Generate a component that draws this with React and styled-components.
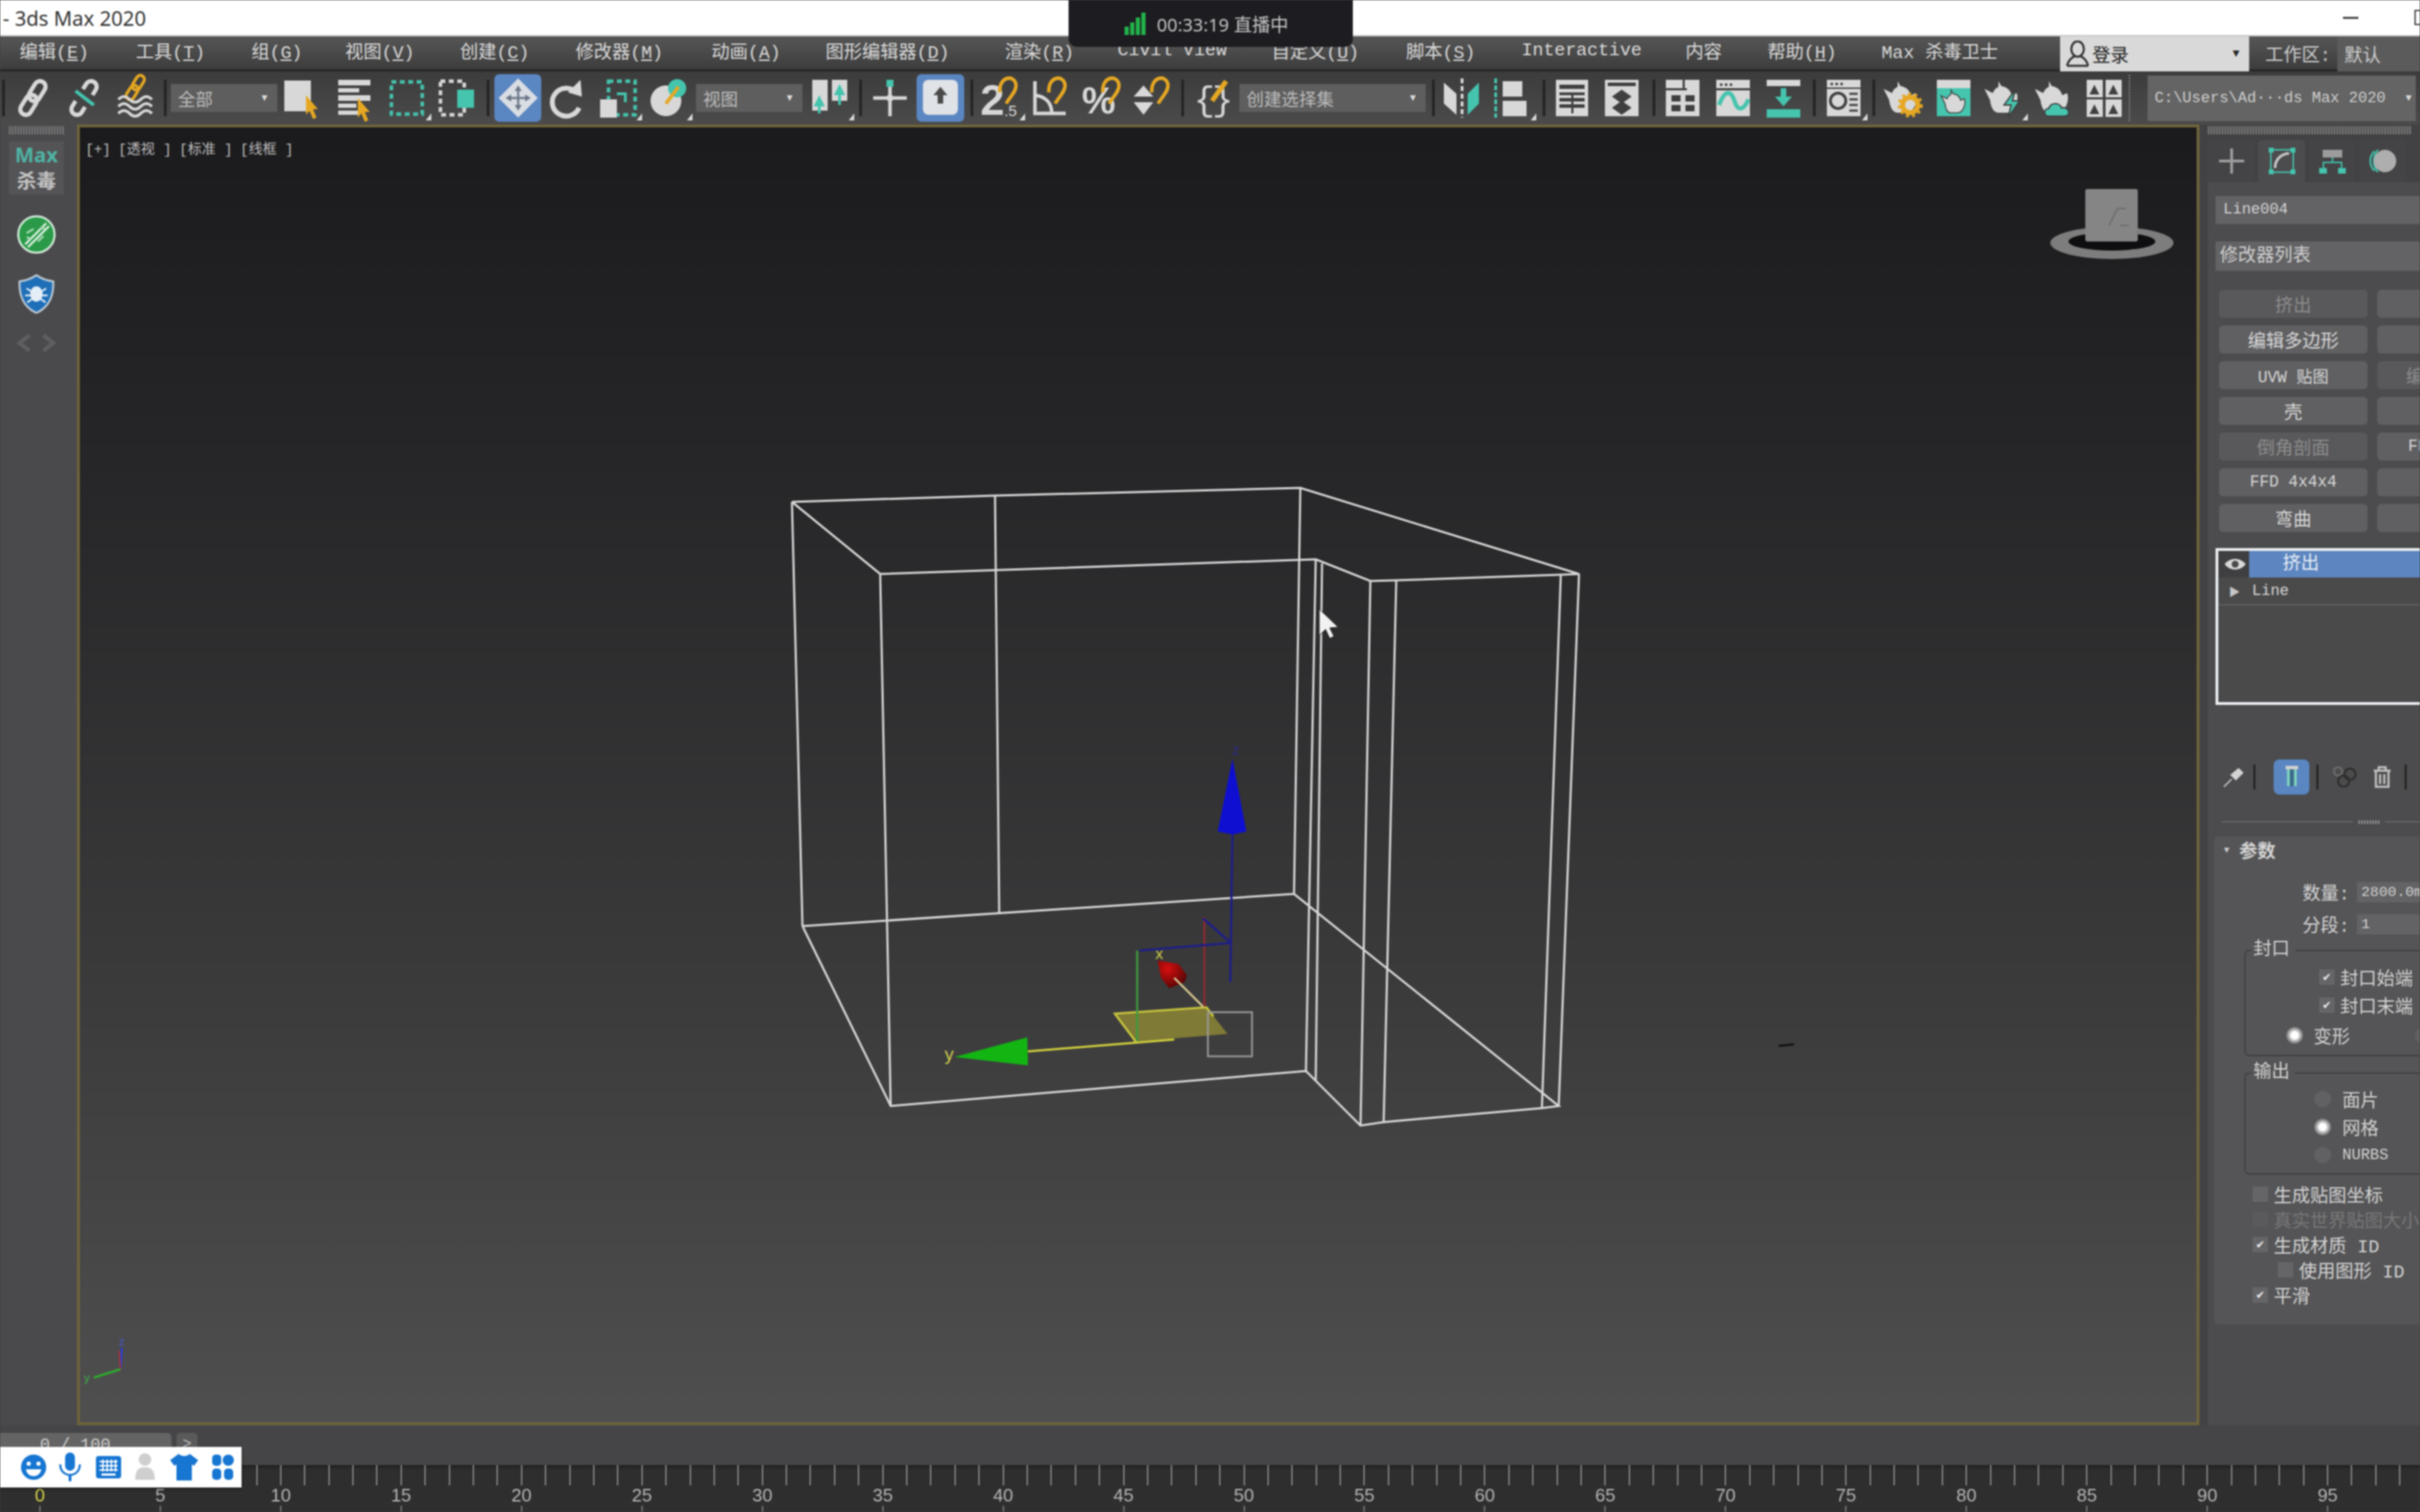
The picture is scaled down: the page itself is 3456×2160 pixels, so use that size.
import React from "react";
import styled, { createGlobalStyle } from "styled-components";

const MONO = `"Liberation Mono", "Noto Sans CJK SC", monospace`;
const SANS = `"Noto Sans", "Noto Sans CJK SC", sans-serif`;
const L = "#d8d8d8";
const T = "#45c4ae";
const Y = "#e6a822";
const D = "#3f3f3f";

const GlobalStyle = createGlobalStyle`
  html, body { margin: 0; padding: 0; background: #414143; overflow: hidden; }
  * { box-sizing: border-box; }
`;

const Page = styled.div`
  position: relative;
  width: 3456px;
  height: 2160px;
  display: flex;
  flex-direction: column;
  overflow: hidden;
  font-family: ${MONO};
  filter: blur(1px);
`;

const TitleBar = styled.div`
  height: 52px;
  flex: none;
  background: #fff;
  display: flex;
  align-items: center;
  justify-content: space-between;
  padding: 0 0 0 4px;
  font: 29px ${SANS};
  color: #333;
  border-bottom: 2px solid #c8c8c8;
`;
const WinButtons = styled.div`
  display: flex;
  align-items: center;
  gap: 80px;
  margin-right: -14px;
`;
const MinBtn = styled.div`
  width: 22px;
  height: 3px;
  background: #444;
`;
const MaxBtn = styled.div`
  width: 22px;
  height: 22px;
  border: 2px solid #444;
`;
const LivePill = styled.div`
  position: absolute;
  left: 1526px;
  top: 0;
  width: 406px;
  height: 67px;
  background: #1d1c20;
  border-radius: 0 0 12px 12px;
  display: flex;
  align-items: center;
  padding-left: 80px;
  gap: 16px;
  color: #c4c4c4;
  font: 26px ${SANS};
  z-index: 3;
`;

const MenuBar = styled.div`
  height: 50px;
  flex: none;
  display: flex;
  align-items: center;
  padding-left: 28px;
  background: linear-gradient(#565656, #3d3d3d);
  border-bottom: 3px solid #262626;
  color: #dadada;
  font-size: 26px;
  white-space: nowrap;
`;
const MenuItem = styled.div`
  width: ${(p) => p.$w}px;
  flex: none;
  padding-bottom: 7px;
`;
const Login = styled.div`
  width: 270px;
  height: 50px;
  flex: none;
  margin-top: 3px;
  background: #d9d9d9;
  color: #222;
  display: flex;
  align-items: center;
  padding: 0 14px 0 8px;
  gap: 4px;
`;
const LoginCaret = styled.span`
  margin-left: auto;
  font-size: 16px;
`;
const WorkLabel = styled.div`
  width: 126px;
  flex: none;
  padding-left: 23px;
  color: #cfcfcf;
`;
const WorkBox = styled.div`
  flex: 1;
  height: 50px;
  margin-top: 3px;
  background: #5b5b5b;
  color: #cfcfcf;
  display: flex;
  align-items: center;
  padding-left: 10px;
`;

const ToolBar = styled.div`
  height: 76px;
  flex: none;
  display: flex;
  align-items: center;
  background: linear-gradient(#3c3c3c, #4b4b4b);
`;
const Slot = styled.div`
  width: ${(p) => p.$w}px;
  flex: none;
  display: flex;
  align-items: center;
  justify-content: center;
  height: ${(p) => (p.$active ? 68 : 56)}px;
  background: ${(p) => (p.$active ? "#5a86c2" : "transparent")};
  border-radius: ${(p) => (p.$active ? 7 : 0)}px;
`;
const Sep = styled.div`
  width: ${(p) => p.$w}px;
  flex: none;
  height: 52px;
  display: flex;
  justify-content: center;
  &::before {
    content: "";
    width: 4px;
    background: #242424;
  }
`;
const Select = styled.div`
  width: ${(p) => p.$w}px;
  margin-left: ${(p) => p.$ml}px;
  flex: none;
  height: 40px;
  background: #5e5e5e;
  color: #bcbcbc;
  font-size: 25px;
  display: flex;
  align-items: center;
  justify-content: space-between;
  padding: 0 14px 0 10px;
`;
const Caret = styled.span`
  font-size: 14px;
  color: #ddd;
`;
const ToolGrip = styled.div`
  width: 39px;
  flex: none;
  height: 66px;
  display: flex;
  justify-content: center;
  padding-right: 10px;
  &::before {
    content: "";
    width: 4px;
    border-left: 2px dotted #8a8a8a;
  }
`;
const PathBox = styled.div`
  width: 383px;
  height: 65px;
  flex: none;
  background: #646464;
  color: #cfcfcf;
  font-size: 22px;
  display: flex;
  align-items: center;
  justify-content: space-between;
  padding: 0 6px 0 10px;
  white-space: nowrap;
`;

const Work = styled.div`
  height: 1858px;
  flex: none;
  display: flex;
`;
const LeftRail = styled.div`
  width: 110px;
  flex: none;
  background: #4a4a4c;
  display: flex;
  flex-direction: column;
  align-items: center;
  padding-right: 6px;
`;
const Grip = styled.div`
  width: ${(p) => p.$w || 78}px;
  height: 12px;
  flex: none;
  margin-top: 2px;
  background: repeating-linear-gradient(90deg, #8a8a8a 0 2px, #4a4a4c 2px 4px);
  opacity: 0.8;
`;
const MaxBox = styled.div`
  width: 78px;
  height: 76px;
  margin-top: 10px;
  background: #545456;
  display: flex;
  flex-direction: column;
  align-items: center;
  font-family: ${SANS};
  line-height: 36px;
`;
const MaxText = styled.div`
  color: #4fb3a4;
  font: bold 29px/38px "Open Sans", sans-serif;
`;
const KillText = styled.div`
  color: #c4c4c4;
  font-size: 28px;
  font-weight: 700;
`;
const RailIcon = styled.svg`
  margin-top: ${(p) => p.$mt}px;
  flex: none;
`;
const Chevrons = styled.div`
  margin-top: 29px;
  display: flex;
  gap: 12px;
`;

const Viewport = styled.div`
  position: relative;
  width: 3031px;
  flex: none;
  background: linear-gradient(#1b1b1d, #262628 25%, #3a3a3b 65%, #4f4f4f);
  border: 4px solid #6f6439;
`;
const ViewLabels = styled.div`
  position: absolute;
  left: 8px;
  top: 20px;
  display: flex;
  gap: 11px;
  color: #bdbdbd;
  font-size: 20px;
  line-height: 26px;
  z-index: 1;
`;
const Scene = styled.svg`
  position: absolute;
  left: -4px;
  top: -4px;
`;

const RightPanel = styled.div`
  flex: 1;
  min-width: 0;
  background: #424244;
  padding-left: 12px;
  display: flex;
  flex-direction: column;
`;
const TabRow = styled.div`
  height: 60px;
  flex: none;
  margin-top: 8px;
  display: flex;
  gap: 5px;
`;
const Tab = styled.div`
  width: 67px;
  flex: none;
  display: flex;
  align-items: center;
  justify-content: center;
  background: ${(p) => (p.$active ? "#4c4c4e" : "#444446")};
  border-radius: 6px 6px 0 0;
`;
const CommandBody = styled.div`
  width: 303px;
  flex: 1;
  background: #4c4c4e;
  padding: 20px 0 0 11px;
  overflow: hidden;
  display: flex;
  flex-direction: column;
`;
const NameField = styled.div`
  height: 40px;
  flex: none;
  background: #636365;
  color: #d4d4d4;
  font-size: 22px;
  line-height: 40px;
  padding-left: 11px;
`;
const ModList = styled.div`
  height: 42px;
  flex: none;
  margin-top: 25px;
  background: #636365;
  color: #d0d0d0;
  font-size: 26px;
  line-height: 42px;
  padding-left: 6px;
`;
const ModButtons = styled.div`
  margin: 27px 0 0 5px;
  display: grid;
  grid-template-columns: 212px 212px;
  grid-auto-rows: 40px;
  gap: 11px 14px;
  flex: none;
`;
const ModButton = styled.div`
  background: ${(p) => (p.$dim ? "#59595b" : "#606062")};
  color: ${(p) => (p.$dim ? "#8c8c8c" : "#d8d8d8")};
  border-radius: 6px;
  font-size: ${(p) => (p.$small ? 23 : 26)}px;
  display: flex;
  align-items: center;
  justify-content: center;
  white-space: pre;
`;
const StackBox = styled.div`
  height: 224px;
  flex: none;
  margin-top: 23px;
  width: 320px;
  border: 4px solid #eceff2;
  background: #4a4a4a;
`;
const StackRowTop = styled.div`
  height: 38px;
  display: flex;
`;
const EyeCell = styled.div`
  width: 44px;
  background: #3f3f41;
  display: flex;
  align-items: center;
  justify-content: center;
  padding-left: 4px;
`;
const StackSelected = styled.div`
  flex: 1;
  background: #5d86c0;
  color: #e8eef7;
  font-size: 26px;
  line-height: 38px;
  padding-left: 48px;
`;
const StackRow = styled.div`
  height: 40px;
  display: flex;
  align-items: center;
  padding-left: 15px;
  gap: 17px;
  color: #d8d8d8;
  font-size: 22px;
  border-bottom: 2px solid #5e5e5e;
`;
const StackArrow = styled.span`
  font-size: 16px;
  color: #c8c8c8;
`;
const StackTools = styled.div`
  height: 50px;
  flex: none;
  margin-top: 78px;
  display: flex;
  align-items: center;
`;
const StackBtn = styled.div`
  width: ${(p) => p.$w}px;
  height: 50px;
  flex: none;
  display: flex;
  align-items: center;
  justify-content: center;
  background: ${(p) => (p.$active ? "#5a86c2" : "transparent")};
  border-radius: 8px;
`;
const StackSep = styled.div`
  width: ${(p) => p.$w}px;
  flex: none;
  height: 36px;
  display: flex;
  justify-content: center;
  &::before {
    content: "";
    width: 3px;
    background: #242424;
  }
`;
const PanelDivider = styled.div`
  margin: 31px 0 0 9px;
  height: 16px;
  flex: none;
  display: flex;
  align-items: center;
  gap: 8px;
  color: #8a8a8a;
`;
const DividerLine = styled.div`
  width: ${(p) => p.$w}px;
  flex: none;
  height: 2px;
  background: #666;
`;
const DividerDots = styled.div`
  width: 30px;
  height: 5px;
  flex: none;
  background: repeating-linear-gradient(90deg, #9a9a9a 0 2px, transparent 2px 4px);
`;
const Rollout = styled.div`
  margin: 13px 0 0 -2px;
  height: 697px;
  flex: none;
  width: 400px;
  background: #555557;
  border-radius: 6px;
  color: #d4d4d4;
  font-size: 26px;
  white-space: nowrap;
`;
const RollHead = styled.div`
  height: 38px;
  display: flex;
  align-items: center;
  gap: 14px;
  padding-left: 14px;
  font-weight: 700;
`;
const RollCaret = styled.span`
  font-size: 13px;
  color: #ccc;
`;
const SpinRow = styled.div`
  height: 30px;
  margin-top: ${(p) => p.$mt}px;
  display: flex;
  align-items: center;
  padding-left: 126px;
`;
const SpinLabel = styled.div`
  width: 78px;
  flex: none;
`;
const SpinField = styled.div`
  width: 200px;
  height: 29px;
  flex: none;
  background: #636365;
  color: #cfcfcf;
  font-size: 21px;
  line-height: 29px;
  padding-left: 6px;
`;
const Group = styled.div`
  position: relative;
  margin: ${(p) => p.$mt}px 0 0 43px;
  height: ${(p) => p.$h}px;
  width: 340px;
  border: 2px solid #414143;
  border-radius: 7px;
  padding-top: ${(p) => p.$pt}px;
`;
const Legend = styled.div`
  position: absolute;
  left: 8px;
  top: -17px;
  padding: 0 8px 0 3px;
  background: #555557;
  line-height: 30px;
`;
const OptRow = styled.div`
  height: ${(p) => p.$h || 40}px;
  margin-top: ${(p) => p.$mt || 0}px;
  display: flex;
  align-items: center;
  padding-left: ${(p) => p.$pl}px;
  gap: ${(p) => p.$gap || 8}px;
  color: ${(p) => (p.$dim ? "#777" : "#d4d4d4")};
`;
const Check = styled.div`
  width: 22px;
  height: 22px;
  flex: none;
  background: ${(p) => (p.$dim ? "#5a5a5c" : "#656567")};
  color: #eee;
  font-size: 18px;
  line-height: 22px;
  text-align: center;
`;
const Radio = styled.div`
  width: 24px;
  height: 24px;
  flex: none;
  margin-left: ${(p) => p.$ml || 0}px;
  border-radius: 50%;
  background: ${(p) => (p.$on ? "radial-gradient(#fff 0 28%, #a8a8a8 52%, #616163 78%)" : "#616163")};
`;
const SmallLabel = styled.span`
  font-size: 22px;
`;
const CheckList = styled.div`
  margin-top: 10px;
`;

const Strip = styled.div`
  height: 57px;
  flex: none;
  display: flex;
  gap: 7px;
  padding-top: 11px;
  background: #454547;
`;
const Slider = styled.div`
  width: 245px;
  height: 46px;
  background: #646464;
  border-radius: 0 6px 6px 0;
  color: #cfcfcf;
  font-size: 24px;
  padding: 4px 0 0 57px;
  white-space: pre;
`;
const SliderNext = styled.div`
  width: 30px;
  height: 46px;
  background: #5a5a5a;
  border-radius: 5px;
  color: #bbb;
  font-size: 22px;
  text-align: center;
  padding-top: 4px;
`;
const Ime = styled.div`
  position: absolute;
  left: 0;
  top: 2067px;
  width: 345px;
  height: 58px;
  background: #fff;
  display: flex;
  align-items: center;
  box-shadow: 0 2px 4px rgba(0, 0, 0, 0.4);
  z-index: 2;
`;
const ImeIcon = styled.svg`
  position: absolute;
  left: ${(p) => p.$x - 22}px;
  top: 7px;
`;

const Timeline = styled.div`
  flex: 1;
  display: flex;
  padding-left: 39.8px;
  background: linear-gradient(#1f1f1f, #2e2e2e 10%, #2f2f2f);
  overflow: hidden;
`;
const Frame = styled.div`
  width: 34.4px;
  flex: none;
  display: flex;
  flex-direction: column;
  align-items: center;
`;
const Tick = styled.div`
  width: 2px;
  height: 29px;
  flex: none;
  background: #858585;
`;
const FrameNo = styled.div`
  height: 30px;
  flex: none;
  margin-top: -1px;
  font: 26px/30px "Liberation Sans", sans-serif;
  color: ${(p) => (p.$now ? "#d9d64a" : "#b5b5b5")};
  white-space: nowrap;
`;
const TickFoot = styled.div`
  width: 2px;
  height: 9px;
  flex: none;
  background: #777;
`;

// toolbar glyphs, drawn on a 56 box
const chain = (c) => (
  <g fill="none" stroke={c} strokeWidth="6" transform="rotate(-58 28 28)">
    <rect x="1" y="20" width="31" height="16" rx="8" />
    <rect x="24" y="20" width="31" height="16" rx="8" />
  </g>
);
const cursor = (x, y) => (
  <polygon transform={`translate(${x} ${y})`} points="0,0 17,20 10,20 15,32 10,34 5,22 0,28" fill={Y} />
);
const magnet = (x, y) => (
  <path transform={`translate(${x} ${y})`} d="M2 20 C0 -4 24 -6 25 10 C25 20 16 26 11 36" fill="none" stroke={Y} strokeWidth="5" />
);
const flyout = <polygon points="54,60 62,50 62,60" fill="#dcdcdc" />;
const teapot = (
  <path d="M20 4 l4 7 c8 1 13 6 15 13 l7 -3 c4 10 -2 28 -14 28 h-12 c-7 0 -11 -8 -12 -18 l-8 -16 l12 6 c1 -4 4 -7 8 -9 z" fill={L} />
);

const ICONS = {
  link: chain(L),
  unlink: (
    <g>
      <g fill="none" stroke={L} strokeWidth="6" transform="rotate(-58 28 28)">
        <path d="M18 20 H9 a8 8 0 0 0 0 16 H18" />
        <path d="M38 20 H47 a8 8 0 0 1 0 16 H38" />
      </g>
      <line x1="16" y1="18" x2="42" y2="38" stroke={T} strokeWidth="5" />
    </g>
  ),
  bind: (
    <g>
      <g transform="translate(8 -7) scale(.72)">{chain(Y)}</g>
      <path d="M4 30 q8 -8 16 0 t16 0 t16 0 M4 40 q8 -8 16 0 t16 0 t16 0 M4 50 q8 -8 16 0 t16 0 t16 0" fill="none" stroke={L} strokeWidth="4" />
    </g>
  ),
  select: (
    <g>
      <rect x="2" y="3" width="38" height="44" fill={L} />
      {cursor(33, 24)}
    </g>
  ),
  byName: (
    <g fill={L}>
      <rect x="4" y="2" width="46" height="8" />
      <rect x="4" y="14" width="30" height="6" />
      <rect x="4" y="24" width="46" height="8" />
      <rect x="4" y="36" width="26" height="6" />
      <rect x="4" y="46" width="30" height="6" />
      {cursor(32, 28)}
    </g>
  ),
  region: (
    <g>
      <rect x="5" y="5" width="44" height="46" fill="none" stroke={T} strokeWidth="5" strokeDasharray="7 5" />
      {flyout}
    </g>
  ),
  windowSel: (
    <g>
      <rect x="4" y="4" width="34" height="48" fill="none" stroke={L} strokeWidth="5" strokeDasharray="7 5" />
      <rect x="28" y="16" width="24" height="26" fill={T} />
    </g>
  ),
  move: (
    <g>
      <polygon points="28,0 56,28 28,56 0,28" fill="#d9dde4" />
      <g fill="#6d7787">
        <polygon points="28,10 33,18 23,18" />
        <polygon points="28,46 33,38 23,38" />
        <polygon points="10,28 18,23 18,33" />
        <polygon points="46,28 38,23 38,33" />
      </g>
      <path d="M28 16 V40 M16 28 H40" stroke="#6d7787" strokeWidth="3" />
    </g>
  ),
  rotate: (
    <g>
      <path d="M40 20 A20 20 0 1 0 44 42" fill="none" stroke={L} strokeWidth="7" />
      <polygon points="46,2 48,26 28,20" fill={L} />
    </g>
  ),
  scale: (
    <g>
      <rect x="14" y="4" width="38" height="48" fill="none" stroke={T} strokeWidth="5" strokeDasharray="7 5" />
      <rect x="2" y="30" width="24" height="26" fill={L} />
      <path d="M26 22 H38 V34" fill="none" stroke={T} strokeWidth="4" />
      {flyout}
    </g>
  ),
  place: (
    <g>
      <circle cx="24" cy="32" r="22" fill={L} />
      <circle cx="40" cy="14" r="13" fill={T} />
      <line x1="24" y1="36" x2="42" y2="12" stroke={Y} strokeWidth="5" />
      {flyout}
    </g>
  ),
  pivot: (
    <g>
      <rect x="2" y="2" width="22" height="44" fill={L} />
      <rect x="30" y="2" width="22" height="30" fill={L} />
      <path d="M12 50 V30 M41 38 V14" stroke={T} strokeWidth="4" />
      <polygon points="12,24 20,40 4,40" fill={T} />
      <polygon points="41,8 49,24 33,24" fill={T} />
      {flyout}
    </g>
  ),
  manip: (
    <g>
      <path d="M28 8 V54 M4 28 H52" stroke={L} strokeWidth="5" />
      <rect x="23" y="2" width="10" height="10" fill={T} />
      <circle cx="28" cy="28" r="5" fill={L} />
    </g>
  ),
  key: (
    <g>
      <rect x="3" y="2" width="50" height="50" rx="8" fill="#dfe2e6" />
      <polygon points="28,12 38,24 32,24 32,36 24,36 24,24 18,24" fill="#4a4a4a" />
    </g>
  ),
  snap: (
    <g>
      <text x="-2" y="52" fontFamily="Liberation Sans" fontWeight="700" fontSize="62" fill={L}>2</text>
      <text x="32" y="54" fontFamily="Liberation Sans" fontSize="22" fill={L}>.5</text>
      {magnet(24, 0)}
      {flyout}
    </g>
  ),
  angle: (
    <g>
      <path d="M6 4 V50 H50 M6 24 C22 26 30 36 30 50" fill="none" stroke={L} strokeWidth="5" />
      {magnet(24, 0)}
    </g>
  ),
  percent: (
    <g>
      <text x="-2" y="50" fontFamily="Liberation Sans" fontWeight="700" fontSize="54" fill={L}>%</text>
      {magnet(26, 0)}
    </g>
  ),
  spin: (
    <g fill={L}>
      <polygon points="16,10 30,26 2,26" />
      <polygon points="16,52 30,34 2,34" />
      {magnet(26, 0)}
    </g>
  ),
  braces: (
    <g>
      <text x="0" y="46" fontFamily="Liberation Mono" fontSize="50" fill={L}>{"{"}</text>
      <text x="26" y="46" fontFamily="Liberation Mono" fontSize="50" fill={L}>{"}"}</text>
      <line x1="26" y1="32" x2="46" y2="4" stroke={Y} strokeWidth="7" />
    </g>
  ),
  mirror: (
    <g>
      <polygon points="2,6 20,22 20,52 2,36" fill={L} />
      <polygon points="52,6 36,22 36,52 52,36" fill={T} />
      <line x1="28" y1="0" x2="28" y2="56" stroke={L} strokeWidth="4" strokeDasharray="7 4" />
    </g>
  ),
  align: (
    <g>
      <line x1="4" y1="0" x2="4" y2="56" stroke={T} strokeWidth="4" strokeDasharray="7 3" />
      <rect x="14" y="4" width="28" height="22" fill={L} />
      <rect x="14" y="32" width="34" height="22" fill={L} />
      {flyout}
    </g>
  ),
  layers: (
    <g>
      <rect x="4" y="2" width="46" height="52" fill={L} />
      <g fill={D}>
        <rect x="9" y="9" width="36" height="6" />
        <rect x="9" y="20" width="36" height="4" />
        <rect x="9" y="28" width="36" height="5" />
        <rect x="9" y="37" width="36" height="5" />
        <rect x="26" y="20" width="3" height="30" />
      </g>
    </g>
  ),
  ribbon: (
    <g>
      <rect x="4" y="2" width="48" height="52" fill={L} />
      <rect x="8" y="6" width="40" height="5" fill={D} />
      <polygon points="28,16 42,26 28,36 14,26" fill={D} />
      <polygon points="28,32 42,42 28,52 14,42" fill={D} />
    </g>
  ),
  schematic: (
    <g>
      <rect x="4" y="2" width="48" height="52" fill={L} />
      <rect x="28" y="2" width="3" height="14" fill={D} />
      <rect x="4" y="14" width="30" height="3" fill={D} />
      <rect x="12" y="24" width="13" height="9" fill={D} />
      <rect x="32" y="24" width="13" height="9" fill={D} />
      <rect x="12" y="38" width="13" height="9" fill={D} />
      <rect x="32" y="38" width="13" height="9" fill={D} />
    </g>
  ),
  curve: (
    <g>
      <rect x="4" y="2" width="48" height="52" fill={L} />
      <rect x="4" y="14" width="48" height="3" fill={D} />
      <circle cx="11" cy="9" r="2" fill={D} />
      <circle cx="18" cy="9" r="2" fill={D} />
      <circle cx="25" cy="9" r="2" fill={D} />
      <path d="M8 38 C18 12 26 20 30 32 C34 46 42 48 50 30" fill="none" stroke={T} strokeWidth="6" />
    </g>
  ),
  dope: (
    <g>
      <rect x="4" y="2" width="48" height="9" fill={L} />
      <polygon points="28,40 40,26 32,26 32,14 24,14 24,26 16,26" fill={T} />
      <rect x="4" y="44" width="48" height="12" fill={T} />
    </g>
  ),
  material: (
    <g>
      <rect x="4" y="2" width="48" height="52" fill={L} />
      <rect x="4" y="13" width="48" height="2" fill={D} />
      <circle cx="11" cy="8" r="2" fill={D} />
      <circle cx="18" cy="8" r="2" fill={D} />
      <circle cx="25" cy="8" r="2" fill={D} />
      <circle cx="20" cy="32" r="11" fill="none" stroke={D} strokeWidth="4" />
      <path d="M36 22 H48 M36 30 H48 M36 38 H48 M36 46 H48" stroke={D} strokeWidth="3" />
      {flyout}
    </g>
  ),
  renderSetup: (
    <g>
      {teapot}
      <circle cx="38" cy="38" r="11" fill="none" stroke={Y} strokeWidth="7" />
      <circle cx="38" cy="38" r="16" fill="none" stroke={Y} strokeWidth="4" strokeDasharray="4 5" />
    </g>
  ),
  renderFrame: (
    <g>
      <rect x="4" y="2" width="48" height="52" fill={T} />
      <rect x="4" y="2" width="48" height="12" fill={L} />
      <g transform="translate(10 14) scale(.72)">
        <g stroke={D} strokeWidth="2">{teapot}</g>
      </g>
    </g>
  ),
  renderNow: (
    <g>
      {teapot}
      <polygon points="44,16 28,38 38,38 34,56 50,32 40,32" fill={T} stroke={D} strokeWidth="2" />
      {flyout}
    </g>
  ),
  renderCloud: (
    <g>
      {teapot}
      <path d="M20 54 c-8 0 -8 -11 0 -11 c2 -9 16 -9 18 -1 c12 -2 14 12 4 12 z" fill={T} stroke={D} strokeWidth="2" />
    </g>
  ),
  viewports: (
    <g fill={L}>
      <rect x="3" y="2" width="23" height="25" />
      <rect x="30" y="2" width="23" height="25" />
      <rect x="3" y="30" width="23" height="25" />
      <rect x="30" y="30" width="23" height="25" />
      <g fill={D}>
        <polygon points="7,23 14,9 21,23" />
        <polygon points="34,23 41,9 48,23" />
        <polygon points="7,51 14,37 21,51" />
        <polygon points="34,51 41,37 48,51" />
      </g>
    </g>
  ),
};

const ToolIcon = ({ name }) => (
  <svg width="56" height="56" viewBox="0 0 56 56" style={{ overflow: "visible" }}>
    {ICONS[name]}
  </svg>
);

const MENU = [
  ["编辑", "E", 166], ["工具", "T", 165], ["组", "G", 134], ["视图", "V", 164],
  ["创建", "C", 165], ["修改器", "M", 194], ["动画", "A", 163], ["图形编辑器", "D", 256],
  ["渲染", "R", 161], ["Civil View", null, 220], ["自定义", "U", 192], ["脚本", "S", 165],
  ["Interactive", null, 234], ["内容", null, 117], ["帮助", "H", 163], ["Max 杀毒卫士", null, 255],
];

const TOOLS = [
  { sep: 10 }, { w: 74, i: "link" }, { w: 71, i: "unlink" }, { w: 76, i: "bind" }, { sep: 10 },
  { dd: "全部", w: 152, ml: 3 }, { w: 72, i: "select" }, { w: 78, i: "byName" }, { w: 72, i: "region" },
  { w: 70, i: "windowSel" }, { sep: 18 }, { w: 67, i: "move", active: true }, { w: 76, i: "rotate" },
  { w: 68, i: "scale" }, { w: 76, i: "place" }, { dd: "视图", w: 152, ml: 1 }, { w: 80, i: "pivot" },
  { sep: 6 }, { w: 77, i: "manip" }, { w: 68, i: "key", active: true }, { sep: 22 }, { w: 62, i: "snap" },
  { w: 78, i: "angle" }, { w: 72, i: "percent" }, { w: 68, i: "spin" }, { sep: 20 }, { w: 68, i: "braces" },
  { dd: "创建选择集", w: 266, ml: 3 }, { sep: 22 }, { w: 60, i: "mirror" }, { w: 84, i: "align" }, { sep: 6 },
  { w: 76, i: "layers" }, { w: 64, i: "ribbon" }, { sep: 28 }, { w: 54, i: "schematic" }, { w: 90, i: "curve" },
  { w: 54, i: "dope" }, { sep: 34 }, { w: 50, i: "material" }, { sep: 36 }, { w: 48, i: "renderSetup" },
  { w: 96, i: "renderFrame" }, { w: 48, i: "renderNow" }, { w: 96, i: "renderCloud" }, { w: 46, i: "viewports" },
];

const MODIFIERS = [
  ["挤出", 1], ["", 0], ["编辑多边形", 0], ["", 0], ["UVW 贴图", 0, 1], ["编辑样条线", 1], ["壳", 0], ["", 0],
  ["倒角剖面", 1], ["FFD 2x2x2", 0, 1], ["FFD 4x4x4", 0, 1], ["", 0], ["弯曲", 0], ["", 0],
];

const wire = [
  "1131,717 1421,708 1857,697 2255,820 2229,821 1994,829 1957,830 1879,799 1257,820 1131,717",
  "1131,717 1146,1323", "1421,708 1427,1305", "1857,697 1848,1277", "1257,820 1272,1580",
  "1879,799 1865,1530", "1888,805 1879,1543", "1957,830 1943,1608", "1994,829 1976,1603",
  "2229,821 2202,1583", "2255,820 2226,1580",
  "1146,1323 1848,1277 2226,1580 2202,1583 1976,1603 1943,1608 1865,1530 1272,1580 1146,1323",
];

const Scene3D = () => (
  <Scene width="3031" height="1858" viewBox="110 178 3031 1858">
    <defs>
      <radialGradient id="redTip" cx="35%" cy="30%" r="70%">
        <stop offset="0" stopColor="#d80f0f" />
        <stop offset="1" stopColor="#5c0606" />
      </radialGradient>
    </defs>
    <g fill="none" stroke="#d8d8d8" strokeWidth="3">
      {wire.map((pts) => (
        <polyline key={pts} points={pts} />
      ))}
    </g>

    <polygon points="1592,1448 1723,1439 1753,1477 1622,1488" fill="#7f7a35" />
    <path d="M1622,1488 L1592,1448 L1723,1439 L1733,1452" fill="none" stroke="#c9c63e" strokeWidth="3" />
    <line x1="1468" y1="1502" x2="1677" y2="1485" stroke="#d4d23c" strokeWidth="3" />
    <line x1="1624" y1="1358" x2="1624" y2="1487" stroke="#3f9a3f" strokeWidth="3" />
    <line x1="1720" y1="1310" x2="1720" y2="1438" stroke="#8e2a30" strokeWidth="3" />
    <path d="M1758,1347 L1718,1312 M1627,1358 L1758,1347 M1760,1188 L1757,1403" fill="none" stroke="#1d1d8c" strokeWidth="3" />
    <polygon points="1760,1084 1739,1188 1760,1192 1780,1188" fill="#0f0fd2" />
    <text x="1760" y="1078" fontFamily="Liberation Sans" fontSize="20" fill="#2a2a80">z</text>
    <polygon points="1363,1510 1467,1482 1468,1522" fill="#13b513" />
    <text x="1349" y="1515" fontFamily="Liberation Sans" fontSize="26" fill="#cfcc4a">y</text>
    <polygon points="1653,1372 1683,1377 1695,1393 1692,1403 1670,1412 1658,1397" fill="url(#redTip)" />
    <line x1="1677" y1="1397" x2="1718" y2="1438" stroke="#d8c890" strokeWidth="3" />
    <text x="1650" y="1370" fontFamily="Liberation Sans" fontSize="22" fill="#cfcc4a">x</text>
    <rect x="1725" y="1446" width="63" height="63" fill="none" stroke="#9a9a9a" strokeWidth="2.5" />

    <polygon points="1884,870 1884,908 1893,899 1899,912 1905,909 1899,897 1911,896" fill="#f2f2f2" stroke="#222" strokeWidth="1" />
    <path d="M2540,1494 L2562,1492" stroke="#111" strokeWidth="3" />

    <ellipse cx="3016" cy="347" rx="88" ry="23" fill="#7d7d7d" />
    <ellipse cx="3016" cy="345" rx="62" ry="13" fill="#0e0e10" />
    <rect x="2978" y="270" width="75" height="75" rx="3" fill="#858585" />
    <path d="M3012,322 L3024,298 M3024,298 H3036 M3028,322 H3040" stroke="#6c6c6c" strokeWidth="2" />

    <path d="M174,1925 L172,1956" stroke="#2a3fd0" strokeWidth="3" />
    <path d="M172,1956 L170,1930" stroke="#b03030" strokeWidth="2" />
    <path d="M172,1956 L134,1968" stroke="#2cae2c" strokeWidth="3" />
    <text x="170" y="1922" fontFamily="Liberation Sans" fontSize="16" fill="#4a55c8">z</text>
    <text x="120" y="1974" fontFamily="Liberation Sans" fontSize="16" fill="#3cb04c">y</text>
  </Scene>
);

function App() {
  const frames = Array.from({ length: 100 }, (_, i) => i);
  return (
    <>
      <GlobalStyle />
      <Page>
        <TitleBar>
          <span>- 3ds Max 2020</span>
          <WinButtons>
            <MinBtn />
            <MaxBtn />
          </WinButtons>
        </TitleBar>
        <LivePill>
          <svg width="30" height="32" viewBox="0 0 30 32">
            <g fill="#21b24b">
              <rect x="0" y="20" width="6" height="12" />
              <rect x="8" y="14" width="6" height="18" />
              <rect x="16" y="7" width="6" height="25" />
              <rect x="24" y="0" width="6" height="32" />
            </g>
          </svg>
          <span>00:33:19 直播中</span>
        </LivePill>

        <MenuBar>
          {MENU.map(([label, key, w]) => (
            <MenuItem key={label} $w={w}>
              {label}
              {key && (
                <>
                  (<u>{key}</u>)
                </>
              )}
            </MenuItem>
          ))}
          <Login>
            <svg width="34" height="38" viewBox="0 0 34 38">
              <ellipse cx="17" cy="12" rx="9" ry="11" fill="none" stroke="#333" strokeWidth="3" />
              <path d="M2 36 C4 26 10 24 13 22 M32 36 C30 26 24 24 21 22 M2 36 H32" fill="none" stroke="#333" strokeWidth="3" />
            </svg>
            登录
            <LoginCaret>▼</LoginCaret>
          </Login>
          <WorkLabel>工作区:</WorkLabel>
          <WorkBox>默认</WorkBox>
        </MenuBar>

        <ToolBar>
          {TOOLS.map((t, n) => {
            if (t.sep) return <Sep key={n} $w={t.sep} />;
            if (t.dd)
              return (
                <Select key={n} $w={t.w} $ml={t.ml}>
                  {t.dd}
                  <Caret>▼</Caret>
                </Select>
              );
            return (
              <Slot key={n} $w={t.w} $active={t.active}>
                <ToolIcon name={t.i} />
              </Slot>
            );
          })}
          <ToolGrip />
          <PathBox>
            C:\Users\Ad···ds Max 2020
            <Caret>▼</Caret>
          </PathBox>
        </ToolBar>

        <Work>
          <LeftRail>
            <Grip />
            <MaxBox>
              <MaxText>Max</MaxText>
              <KillText>杀毒</KillText>
            </MaxBox>
            <RailIcon $mt={29} width="56" height="56" viewBox="0 0 56 56">
              <circle cx="28" cy="28" r="26" fill="#2a9a48" stroke="#cfe8d6" strokeWidth="3" />
              <path d="M12 42 L42 12 M16 46 L46 16" stroke="#dff2e4" strokeWidth="3" />
              <path d="M14 26 l10 -6 M30 38 l8 -8 M34 18 l6 2 M20 34 l-6 -2" stroke="#a5d8b2" strokeWidth="3" />
            </RailIcon>
            <RailIcon $mt={29} width="52" height="56" viewBox="0 0 52 56">
              <path d="M26 1 C33 6 42 9 50 10 C51 30 44 47 26 55 C8 47 1 30 2 10 C10 9 19 6 26 1 Z" fill="#1f6fb8" stroke="#b9c6d2" strokeWidth="3" />
              <ellipse cx="26" cy="28" rx="9" ry="11" fill="#e4eef6" />
              <path d="M12 20 l8 5 M40 20 l-8 5 M10 30 h8 M42 30 h-8 M13 40 l7 -5 M39 40 l-7 -5" stroke="#e4eef6" strokeWidth="2.5" />
            </RailIcon>
            <Chevrons>
              <svg width="24" height="26" viewBox="0 0 24 26">
                <path d="M20 2 L6 13 L20 24" fill="none" stroke="#5e5e60" strokeWidth="6" />
              </svg>
              <svg width="24" height="26" viewBox="0 0 24 26">
                <path d="M4 2 L18 13 L4 24" fill="none" stroke="#5e5e60" strokeWidth="6" />
              </svg>
            </Chevrons>
          </LeftRail>

          <Viewport>
            <ViewLabels>
              <span>[+]</span>
              <span>[透视 ]</span>
              <span>[标准 ]</span>
              <span>[线框 ]</span>
            </ViewLabels>
            <Scene3D />
          </Viewport>

          <RightPanel>
            <Grip $w={290} />
            <TabRow>
              <Tab>
                <svg width="40" height="40" viewBox="0 0 40 40">
                  <path d="M20 2 V38 M2 20 H38" stroke="#9c9c9c" strokeWidth="4" />
                </svg>
              </Tab>
              <Tab $active>
                <svg width="40" height="40" viewBox="0 0 40 40">
                  <rect x="4" y="4" width="32" height="32" fill="none" stroke={T} strokeWidth="2" />
                  <g fill={T}>
                    <rect x="1" y="1" width="7" height="7" />
                    <rect x="32" y="1" width="7" height="7" />
                    <rect x="1" y="32" width="7" height="7" />
                    <rect x="32" y="32" width="7" height="7" />
                  </g>
                  <path d="M10 30 C10 18 18 10 30 9" fill="none" stroke="#c4c4c4" strokeWidth="4" />
                </svg>
              </Tab>
              <Tab>
                <svg width="40" height="40" viewBox="0 0 40 40">
                  <rect x="6" y="4" width="28" height="11" fill="#9c9c9c" />
                  <path d="M20 15 V22 M7 30 V22 H33 V30" fill="none" stroke={T} strokeWidth="2" />
                  <rect x="1" y="30" width="11" height="8" fill={T} />
                  <rect x="28" y="30" width="11" height="8" fill={T} />
                </svg>
              </Tab>
              <Tab>
                <svg width="44" height="40" viewBox="0 0 44 40">
                  <path d="M10 6 C2 14 2 26 10 34 M15 4 C7 13 7 27 15 36" fill="none" stroke={T} strokeWidth="2.5" />
                  <circle cx="25" cy="20" r="16" fill="#aeaeae" />
                </svg>
              </Tab>
            </TabRow>
            <CommandBody>
              <NameField>Line004</NameField>
              <ModList>修改器列表</ModList>
              <ModButtons>
                {MODIFIERS.map(([label, dim, small], n) => (
                  <ModButton key={n} $dim={dim} $small={small}>
                    {label}
                  </ModButton>
                ))}
              </ModButtons>
              <StackBox>
                <StackRowTop>
                  <EyeCell>
                    <svg width="32" height="20" viewBox="0 0 32 20">
                      <path d="M1 10 C8 0 24 0 31 10 C24 20 8 20 1 10 Z" fill="#d8d8d8" />
                      <circle cx="16" cy="10" r="5" fill="#4a4a4a" />
                    </svg>
                  </EyeCell>
                  <StackSelected>挤出</StackSelected>
                </StackRowTop>
                <StackRow>
                  <StackArrow>▶</StackArrow>
                  Line
                </StackRow>
              </StackBox>
              <StackTools>
                <StackBtn $w={52}>
                  <svg width="30" height="30" viewBox="0 0 30 30">
                    <path d="M1 29 L12 18" stroke="#c4c4c4" strokeWidth="2" />
                    <polygon points="10,12 22,2 29,9 18,20" fill="#d4d4d4" />
                  </svg>
                </StackBtn>
                <StackSep $w={6} />
                <StackBtn $w={25} />
                <StackBtn $w={51} $active>
                  <svg width="22" height="34" viewBox="0 0 22 34">
                    <rect x="2" y="1" width="18" height="5" fill="#cfcfcf" />
                    <rect x="4" y="6" width="14" height="24" fill="#7fd2bf" />
                    <rect x="8" y="6" width="6" height="24" fill="#3c6a8a" />
                  </svg>
                </StackBtn>
                <StackBtn $w={8} />
                <StackSep $w={6} />
                <StackBtn $w={72}>
                  <svg width="36" height="30" viewBox="0 0 36 30" fill="none" stroke="#2f2f2f" strokeWidth="3">
                    <circle cx="9" cy="7" r="6" stroke="#6a6a6a" />
                    <circle cx="26" cy="11" r="8" />
                    <circle cx="17" cy="21" r="8" />
                  </svg>
                </StackBtn>
                <StackBtn $w={36}>
                  <svg width="26" height="32" viewBox="0 0 26 32" fill="none" stroke="#c4c4c4" strokeWidth="3">
                    <path d="M1 7 H25 M8 7 V2 H18 V7 M4 7 V30 H22 V7 M10 12 V26 M16 12 V26" />
                  </svg>
                </StackBtn>
                <StackBtn $w={12} />
                <StackSep $w={6} />
              </StackTools>
              <PanelDivider>
                <DividerLine $w={187} />
                <DividerDots />
                <DividerLine $w={60} />
              </PanelDivider>
              <Rollout>
                <RollHead>
                  <RollCaret>▼</RollCaret>
                  参数
                </RollHead>
                <SpinRow $mt={26}>
                  <SpinLabel>数量:</SpinLabel>
                  <SpinField>2800.0mm</SpinField>
                </SpinRow>
                <SpinRow $mt={16}>
                  <SpinLabel>分段:</SpinLabel>
                  <SpinField>1</SpinField>
                </SpinRow>
                <Group $mt={22} $h={152} $pt={17}>
                  <Legend>封口</Legend>
                  <OptRow $pl={105}>
                    <Check>✔</Check>
                    封口始端
                  </OptRow>
                  <OptRow $pl={105}>
                    <Check>✔</Check>
                    封口末端
                  </OptRow>
                  <OptRow $pl={58} $gap={15} $mt={3}>
                    <Radio $on />
                    变形
                    <Radio $ml={78} />
                  </OptRow>
                </Group>
                <Group $mt={23} $h={146} $pt={16}>
                  <Legend>输出</Legend>
                  <OptRow $pl={98} $gap={16}>
                    <Radio />
                    面片
                  </OptRow>
                  <OptRow $pl={98} $gap={16}>
                    <Radio $on />
                    网格
                  </OptRow>
                  <OptRow $pl={98} $gap={16}>
                    <Radio />
                    <SmallLabel>NURBS</SmallLabel>
                  </OptRow>
                </Group>
                <CheckList>
                  <OptRow $h={36} $pl={55}>
                    <Check />
                    生成贴图坐标
                  </OptRow>
                  <OptRow $h={36} $pl={55} $dim>
                    <Check $dim />
                    真实世界贴图大小
                  </OptRow>
                  <OptRow $h={36} $pl={55}>
                    <Check>✔</Check>
                    生成材质 ID
                  </OptRow>
                  <OptRow $h={36} $pl={91}>
                    <Check />
                    使用图形 ID
                  </OptRow>
                  <OptRow $h={36} $pl={55}>
                    <Check>✔</Check>
                    平滑
                  </OptRow>
                </CheckList>
              </Rollout>
            </CommandBody>
          </RightPanel>
        </Work>

        <Strip>
          <Slider>0 / 100</Slider>
          <SliderNext>&gt;</SliderNext>
        </Strip>

        <Ime>
          <ImeIcon $x={-6} width="44" height="44" viewBox="0 0 44 44">
            <circle cx="12" cy="22" r="14" fill="#1676d2" />
          </ImeIcon>
          <ImeIcon $x={48} width="44" height="44" viewBox="0 0 44 44">
            <circle cx="22" cy="22" r="18" fill="#1676d2" />
            <circle cx="15" cy="17" r="3" fill="#fff" />
            <circle cx="29" cy="17" r="3" fill="#fff" />
            <path d="M11 25 H33 C31 38 13 38 11 25 Z" fill="#fff" />
          </ImeIcon>
          <ImeIcon $x={100} width="44" height="44" viewBox="0 0 44 44">
            <rect x="15" y="1" width="14" height="26" rx="7" fill="#1676d2" />
            <path d="M8 18 C8 38 36 38 36 18" fill="none" stroke="#1676d2" strokeWidth="3" />
            <path d="M22 33 V42" stroke="#1676d2" strokeWidth="4" />
          </ImeIcon>
          <ImeIcon $x={155} width="44" height="44" viewBox="0 0 44 44">
            <rect x="4" y="6" width="36" height="32" rx="4" fill="#1676d2" />
            <path d="M9 14 H35 M9 20 H35 M9 26 H35 M14 11 V28 M20 11 V28 M26 11 V28 M32 11 V28" stroke="#fff" strokeWidth="2" />
            <rect x="12" y="31" width="20" height="3" fill="#fff" />
          </ImeIcon>
          <ImeIcon $x={210} width="44" height="44" viewBox="0 0 44 44">
            <circle cx="19" cy="11" r="9" fill="#cfcfcf" />
            <path d="M5 40 C5 26 10 22 19 22 C28 22 33 26 33 40 Z" fill="#cfcfcf" />
          </ImeIcon>
          <ImeIcon $x={263} width="44" height="44" viewBox="0 0 44 44">
            <path d="M14 3 C18 7 26 7 30 3 L42 12 L36 20 L33 18 V41 H11 V18 L8 20 L2 12 Z" fill="#1676d2" />
          </ImeIcon>
          <ImeIcon $x={318} width="44" height="44" viewBox="0 0 44 44">
            <g fill="#1676d2">
              <rect x="7" y="4" width="13" height="16" rx="5" />
              <circle cx="30" cy="12" r="8" />
              <rect x="7" y="24" width="13" height="16" rx="5" />
              <rect x="24" y="24" width="13" height="16" rx="5" />
            </g>
          </ImeIcon>
        </Ime>

        <Timeline>
          {frames.map((f) => (
            <Frame key={f}>
              <Tick />
              <FrameNo $now={f === 0}>{f % 5 === 0 ? f : ""}</FrameNo>
              {f % 5 === 0 && <TickFoot />}
            </Frame>
          ))}
        </Timeline>
      </Page>
    </>
  );
}

export default App;
